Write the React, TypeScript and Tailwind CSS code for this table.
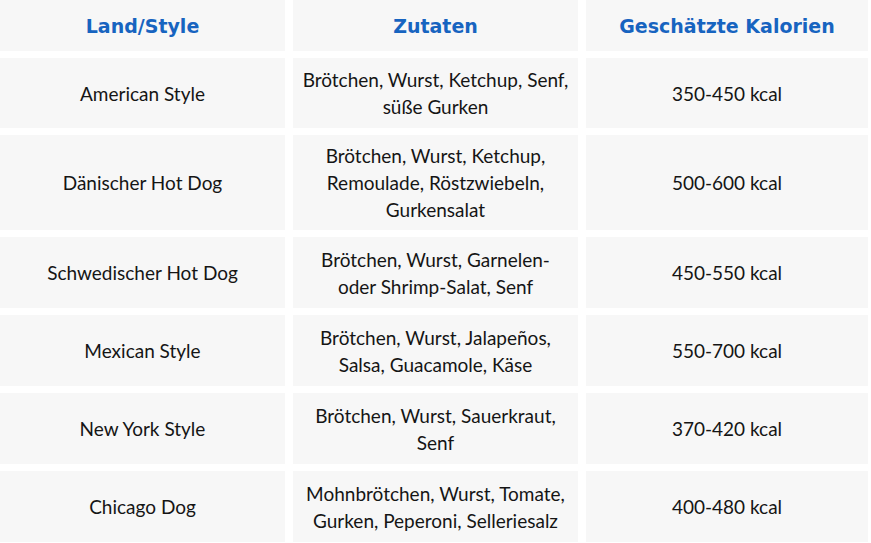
import React from "react"

interface Row {
  land: string
  zutaten: string[]
  kalorien: string
  height: string
}

const rows: Row[] = [
  {
    land: "American Style",
    zutaten: ["Brötchen, Wurst, Ketchup, Senf,", "süße Gurken"],
    kalorien: "350-450 kcal",
    height: "h-[70px]"
  },
  {
    land: "Dänischer Hot Dog",
    zutaten: ["Brötchen, Wurst, Ketchup,", "Remoulade, Röstzwiebeln,", "Gurkensalat"],
    kalorien: "500-600 kcal",
    height: "h-[95px]"
  },
  {
    land: "Schwedischer Hot Dog",
    zutaten: ["Brötchen, Wurst, Garnelen-", "oder Shrimp-Salat, Senf"],
    kalorien: "450-550 kcal",
    height: "h-[71px]"
  },
  {
    land: "Mexican Style",
    zutaten: ["Brötchen, Wurst, Jalapeños,", "Salsa, Guacamole, Käse"],
    kalorien: "550-700 kcal",
    height: "h-[71px]"
  },
  {
    land: "New York Style",
    zutaten: ["Brötchen, Wurst, Sauerkraut,", "Senf"],
    kalorien: "370-420 kcal",
    height: "h-[71px]"
  },
  {
    land: "Chicago Dog",
    zutaten: ["Mohnbrötchen, Wurst, Tomate,", "Gurken, Peperoni, Selleriesalz"],
    kalorien: "400-480 kcal",
    height: "h-[71px]"
  }
]

const cell = "bg-[#f7f7f7] flex flex-col items-center justify-center text-center"
const body = "text-[19px] leading-[27px] text-[#151515]"

export default function App() {
  return (
    <div className="w-[871px] h-[543px] overflow-hidden bg-white font-['Lato',sans-serif]">
      <div className="grid grid-cols-[285px_285px_282px] gap-x-2 gap-y-[7px]">
        {/* Header */}
        {["Land/Style", "Zutaten", "Geschätzte Kalorien"].map(h => (
          <div
            key={h}
            className={`${cell} h-[51px] pt-[2px] font-['DejaVu_Sans',sans-serif] text-[19px] font-bold text-[#1764c0]`}
          >
            {h}
          </div>
        ))}

        {rows.map(row => (
          <React.Fragment key={row.land}>
            <div className={`${cell} ${row.height} ${body}`}>{row.land}</div>
            <div className={`${cell} ${row.height} ${body}`}>
              {row.zutaten.map(line => (
                <span key={line} className="block">
                  {line}
                </span>
              ))}
            </div>
            <div className={`${cell} ${row.height} ${body}`}>{row.kalorien}</div>
          </React.Fragment>
        ))}
      </div>
    </div>
  )
}
